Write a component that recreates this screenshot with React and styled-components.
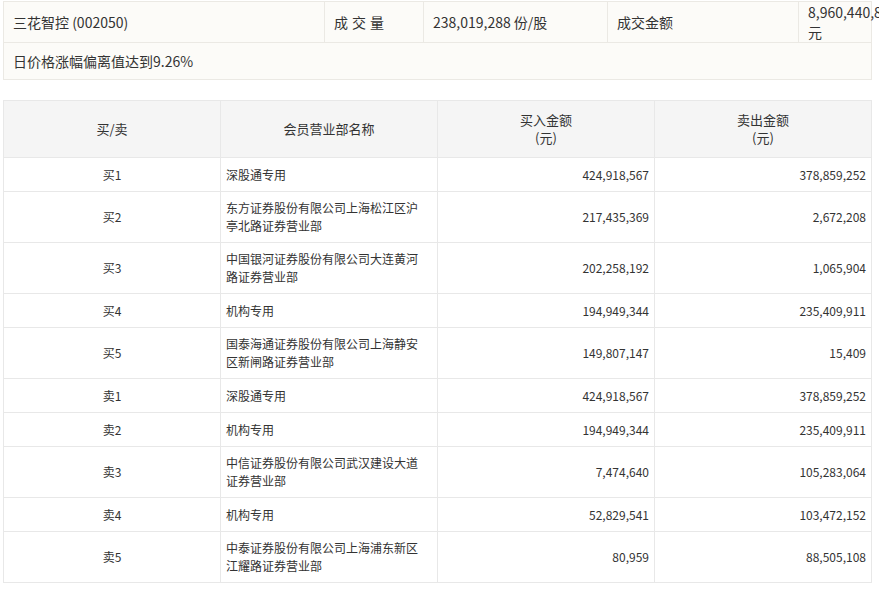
import React from "react";
import styled, { createGlobalStyle } from "styled-components";

const G = createGlobalStyle`
  body { margin: 0; background: #fff; font-family: "Noto Sans CJK SC", "Noto Sans", sans-serif; color: #333; }
`;
const Wrap = styled.div` padding: 1px 7px 0 3px; `;
const Info = styled.table`
  width: 869px; border-collapse: collapse; background: #fcfbf8; font-size: 14px; table-layout: fixed;
  td { border: 1px solid #ebe9e4; height: 36px; padding: 0 9px; }
`;
const ICell = styled.td`
  width: ${p => p.$w ? p.$w + "px" : "auto"};
  letter-spacing: ${p => p.$sp ? "4px" : "normal"};
`;
const Main = styled.table`
  width: 869px; border-collapse: collapse; margin-top: 20px; font-size: 12px; table-layout: fixed;
  th, td { border: 1px solid #e8e8e8; padding: 0 5px; line-height: 18px; }
  th { background: #f5f5f5; font-weight: normal; font-size: 13px; height: 56px; }
  td { height: 33px; }
`;
const Col = styled.col` width: ${p => p.$w ? p.$w + "px" : "auto"}; `;
const C = styled.td` text-align: center; `;
const Name = styled.td`
  && { height: ${p => p.$tall ? 50 : 33}px; padding-right: 14px; }
`;
const R = styled.td` text-align: right; `;

const rows = [
  ["买1","深股通专用","424,918,567","378,859,252"],
  ["买2","东方证券股份有限公司上海松江区沪亭北路证券营业部","217,435,369","2,672,208"],
  ["买3","中国银河证券股份有限公司大连黄河路证券营业部","202,258,192","1,065,904"],
  ["买4","机构专用","194,949,344","235,409,911"],
  ["买5","国泰海通证券股份有限公司上海静安区新闸路证券营业部","149,807,147","15,409"],
  ["卖1","深股通专用","424,918,567","378,859,252"],
  ["卖2","机构专用","194,949,344","235,409,911"],
  ["卖3","中信证券股份有限公司武汉建设大道证券营业部","7,474,640","105,283,064"],
  ["卖4","机构专用","52,829,541","103,472,152"],
  ["卖5","中泰证券股份有限公司上海浦东新区江耀路证券营业部","80,959","88,505,108"],
];

export default function App() {
  return (
    <Wrap>
      <G />
      <Info>
        <tbody>
          <tr>
            <ICell $w={302}>三花智控 (002050)</ICell>
            <ICell $w={80} $sp>成交量</ICell>
            <ICell $w={165}>238,019,288 份/股</ICell>
            <ICell $w={172}>成交金额</ICell>
            <ICell>8,960,440,857 元</ICell>
          </tr>
          <tr><ICell colSpan={5}>日价格涨幅偏离值达到9.26%</ICell></tr>
        </tbody>
      </Info>
      <Main>
        <colgroup><Col $w={217} /><Col $w={217} /><Col $w={217} /><Col /></colgroup>
        <thead>
          <tr><th>买/卖</th><th>会员营业部名称</th><th>买入金额<br />(元)</th><th>卖出金额<br />(元)</th></tr>
        </thead>
        <tbody>
          {rows.map(r => (
            <tr key={r[0]}>
              <C>{r[0]}</C>
              <Name $tall={r[1].length > 8}>{r[1]}</Name>
              <R>{r[2]}</R>
              <R>{r[3]}</R>
            </tr>
          ))}
        </tbody>
      </Main>
    </Wrap>
  );
}
